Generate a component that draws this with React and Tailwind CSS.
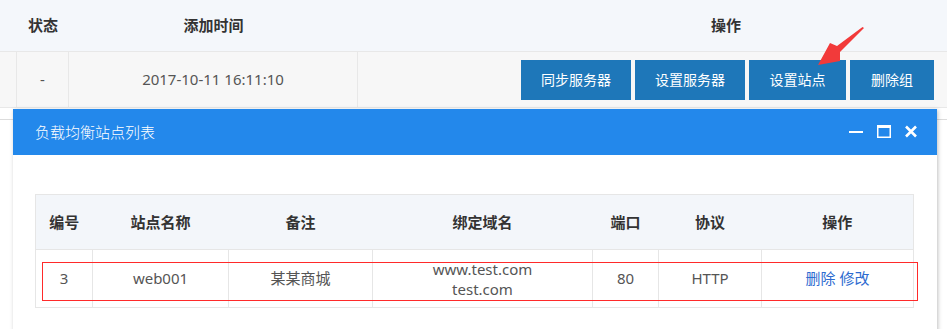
const font = { fontFamily: '"Noto Sans", "Noto Sans CJK SC", sans-serif' };

const sites = [
  { id: 3, name: 'web001', note: '某某商城', domains: ['www.test.com', 'test.com'], port: 80, protocol: 'HTTP' },
];

function WindowIcons() {
  return (
    <svg width="70" height="14" viewBox="0 0 70 14" className="ml-auto">
      <rect x="0" y="6" width="14" height="2" fill="#fff" />
      <rect x="28.75" y="0.75" width="12.5" height="11.5" fill="none" stroke="#fff" strokeWidth="1.5" />
      <rect x="28" y="0" width="14" height="3" fill="#fff" />
      <path d="M57 1.5 L67 11.5 M67 1.5 L57 11.5" stroke="#fff" strokeWidth="2.6" />
    </svg>
  );
}

export default function App() {
  return (
    <div className="relative w-[947px] h-[329px] overflow-hidden bg-white text-[15px] text-[#555]" style={font}>
      {/* Page table behind the dialog */}
      <div className="grid grid-cols-[17px_52px_289px_1fr] h-[52px] bg-[#f4f7fb] border-b border-[#e8e8e8] font-bold text-[#333]">
        <div />
        <div className="flex items-center justify-center">状态</div>
        <div className="flex items-center justify-center">添加时间</div>
        <div className="flex items-center pl-[353px]">操作</div>
      </div>
      <div className="grid grid-cols-[17px_52px_289px_1fr] h-[56px] bg-[#f7f7f7] border-b border-[#e8e8e8]">
        <div className="border-r border-[#e8e8e8]" />
        <div className="flex items-center justify-center border-r border-[#e8e8e8]">-</div>
        <div className="flex items-center justify-center border-r border-[#e8e8e8]">2017-10-11 16:11:10</div>
        <div className="flex items-center justify-end gap-1 pr-[13px] text-sm">
          <button className="w-[110px] h-10 bg-[#1e77b9] text-white">同步服务器</button>
          <button className="w-[110px] h-10 bg-[#1e77b9] text-white">设置服务器</button>
          <button className="w-[97px] h-10 bg-[#1e77b9] text-white">设置站点</button>
          <button className="w-[84px] h-10 bg-[#1e77b9] text-white">删除组</button>
        </div>
      </div>
      <div className="h-[12px] border-b border-[#dcdcdc]" />

      {/* Annotation arrow */}
      <svg className="absolute left-[812px] top-[24px]" width="56" height="46" viewBox="812 24 56 46">
        <polygon points="864,28 862.5,27 837,46 830,43 818,65 840,61 840,52" fill="#f23a3a" />
      </svg>

      {/* Dialog */}
      <div className="absolute left-[13px] top-[109px] w-[924px] h-[230px] bg-white shadow-[1px_1px_4px_rgba(0,0,0,0.25)]">
        <div className="flex items-center h-[46px] bg-[#2388eb] text-white pl-[22px] pr-[18px]">
          <span className="font-light">负载均衡站点列表</span>
          <WindowIcons />
        </div>
        <div className="px-[22px] pt-[39px]">
          <table className="w-[879px] border-collapse text-center">
            <thead>
              <tr className="h-[55px] bg-[#f3f6fa] font-bold text-[#333]">
                <th className="w-[57px] border border-[#e6e6e6] border-r-0">编号</th>
                <th className="w-[136px] border-y border-[#e6e6e6]">站点名称</th>
                <th className="w-[144px] border-y border-[#e6e6e6]">备注</th>
                <th className="w-[220px] border-y border-[#e6e6e6]">绑定域名</th>
                <th className="w-[66px] border-y border-[#e6e6e6]">端口</th>
                <th className="w-[103px] border-y border-[#e6e6e6]">协议</th>
                <th className="border border-[#e6e6e6] border-l-0">操作</th>
              </tr>
            </thead>
            <tbody>
              {sites.map((s) => (
                <tr key={s.id} className="h-[58px]">
                  <td className="border border-[#e6e6e6]">{s.id}</td>
                  <td className="border border-[#e6e6e6]">{s.name}</td>
                  <td className="border border-[#e6e6e6]">{s.note}</td>
                  <td className="border border-[#e6e6e6] leading-5">
                    {s.domains.map((d) => (
                      <div key={d}>{d}</div>
                    ))}
                  </td>
                  <td className="border border-[#e6e6e6]">{s.port}</td>
                  <td className="border border-[#e6e6e6]">{s.protocol}</td>
                  <td className="border border-[#e6e6e6] text-[#2d6bd0]">
                    <a>删除</a> <a>修改</a>
                  </td>
                </tr>
              ))}
            </tbody>
          </table>
        </div>
        {/* red highlight box annotation */}
        <div className="absolute left-[29px] top-[153px] w-[876px] h-[39px] border border-[#ff2a2a]" />
      </div>
    </div>
  );
}
